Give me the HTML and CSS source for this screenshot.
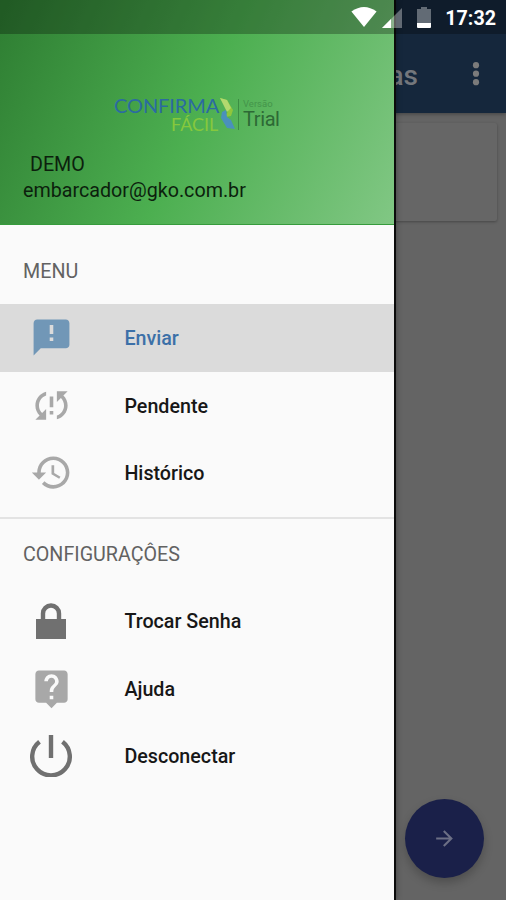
FILE: index.html
```html
<!DOCTYPE html>
<html lang="pt-BR">
<head>
<meta charset="utf-8">
<title>Confirma Fácil</title>
<link rel="stylesheet" href="styles.css">
</head>
<body>
<div class="screen">
  <main class="page">
    <header class="toolbar">
      <h1 class="toolbar-title">Notas</h1>
      <svg class="more" viewBox="0 0 8 24"><circle cx="4" cy="3.2" r="3.1"/><circle cx="4" cy="11.7" r="3.1"/><circle cx="4" cy="20.2" r="3.1"/></svg>
    </header>
    <section class="card"></section>
    <button class="fab" aria-label="Avançar"><svg viewBox="0 0 24 24"><path d="M12 4l-1.41 1.41L16.17 11H4v2h12.17l-5.58 5.59L12 20l8-8z"/></svg></button>
  </main>

  <aside class="drawer">
    <header class="account">
      <div class="logo">
        <div class="logo-name"><span class="logo-top">CONFIRMA</span><span class="logo-bottom">FÁCIL</span></div>
        <svg class="logo-mark" viewBox="0 0 18 36"><path class="mark-green" d="M1 2L8 4L14 14L12 20L6 21L9 15Z"/><path class="mark-light" d="M1 2L8 4L12 12L8 16Z"/><path class="mark-blue" d="M3 16L7 14L8 21L12 24L16 33L8 32L2 22Z"/></svg>
        <div class="logo-edition"><span class="edition-label">Versão</span><span class="edition-name">Trial</span></div>
      </div>
      <p class="account-name">DEMO</p>
      <p class="account-mail">embarcador@gko.com.br</p>
    </header>
    <nav class="menu">
      <h2 class="group-title">MENU</h2>
      <a class="item selected"><span class="icon"><svg class="i-24" viewBox="0 0 24 24"><path d="M20 2H4c-1.1 0-1.99.9-1.99 2L2 22l4-4h14c1.1 0 2-.9 2-2V4c0-1.100-.9-2-2-2zm-7 12h-2v-2h2v2zm0-4h-2V5h2v5z"/></svg></span><span>Enviar</span></a>
      <a class="item"><span class="icon"><svg class="i-24" viewBox="0 0 24 24"><path d="M3 12c0 2.210.91 4.200 2.360 5.640L3 20h6v-6l-2.240 2.240C5.680 15.150 5 13.660 5 12c0-2.610 1.670-4.830 4-5.650V4.260C5.550 5.150 3 8.270 3 12zm8 5h2v-2h-2v2zM21 4h-6v6l2.240-2.240C18.320 8.850 19 10.340 19 12c0 2.610-1.670 4.830-4 5.650v2.090c3.450-.89 6-4.010 6-7.740 0-2.210-.91-4.200-2.360-5.640L21 4zm-10 9h2V7h-2v6z"/></svg></span><span>Pendente</span></a>
      <a class="item"><span class="icon"><svg class="i-24" viewBox="0 0 24 24"><path d="M13 3c-4.970 0-9 4.030-9 9H1l3.890 3.890.07.14L9 12H6c0-3.870 3.130-7 7-7s7 3.130 7 7-3.130 7-7 7c-1.930 0-3.680-.79-4.940-2.060l-1.420 1.420C8.270 19.990 10.510 21 13 21c4.970 0 9-4.030 9-9s-4.030-9-9-9zm-1 5v5l4.280 2.540.72-1.210-3.500-2.080V8H12z"/></svg></span><span>Histórico</span></a>
      <hr class="divider">
      <h2 class="group-title">CONFIGURAÇÔES</h2>
      <a class="item"><span class="icon dark"><svg class="i-lock" viewBox="0 0 30 36"><path d="M0 16H30V36H0z"/><path class="stroke" d="M7 17V10.500a8 8 0 0 1 16 0V17"/></svg></span><span>Trocar Senha</span></a>
      <a class="item"><span class="icon"><svg class="i-24" viewBox="0 0 24 24"><path d="M19 2H5c-1.110 0-2 .9-2 2v14c0 1.100.89 2 2 2h4l3 3 3-3h4c1.100 0 2-.9 2-2V4c0-1.100-.9-2-2-2zm-6 16h-2v-2h2v2zm2.070-7.750l-.9.920C13.450 11.900 13 12.500 13 14h-2v-.5c0-1.100.45-2.100 1.170-2.830l1.240-1.260c.37-.36.59-.86.59-1.410 0-1.100-.9-2-2-2s-2 .9-2 2H8c0-2.210 1.790-4 4-4s4 1.790 4 4c0 .88-.36 1.680-.93 2.250z"/></svg></span><span>Ajuda</span></a>
      <a class="item"><span class="icon dark"><svg class="i-power" viewBox="0 0 42 42"><path class="stroke" d="M21 0V23M9.500 6.700A18.800 18.800 0 1 0 32.500 6.700"/></svg></span><span>Desconectar</span></a>
    </nav>
  </aside>

  <div class="statusbar">
    <svg class="wifi" viewBox="0 0 26 20"><path d="M13 20L.4 4.500Q13-4.500 25.600 4.500Z"/></svg>
    <svg class="signal" viewBox="0 0 20 20"><path class="faint" d="M20 0V20H0z"/><path d="M9 11V20H0z"/></svg>
    <svg class="battery" viewBox="0 0 14 21"><path class="faint" d="M4 0H10V2H14V16H0V2H4z"/><path d="M0 16H14V20Q14 21 13 21H1Q0 21 0 20z"/></svg>
    <time class="clock">17:32</time>
  </div>
</div>
</body>
</html>
```
FILE: styles.css
```css
* { box-sizing: border-box; }
body { margin: 0; font-family: Roboto, "Liberation Sans", sans-serif; }
h1, h2, p { margin: 0; font-weight: 400; }
svg { display: block; fill: currentColor; }

.screen { position: relative; width: 506px; height: 900px; overflow: hidden; }

.page { height: 900px; background: #646464; display: flex; flex-direction: column; }
.toolbar {
  height: 113px; padding: 36px 26px 0 0; flex: none;
  display: flex; align-items: center; justify-content: flex-end;
  background: #15273c; color: #74777c;
  box-shadow: 0 1px 4px rgba(0, 0, 0, .35);
}
.toolbar-title { font-size: 28px; font-weight: 500; line-height: 32px; margin: 2px 54px 0 0; }
.more { width: 8px; height: 24px; margin-top: -2px; color: #7b7b7b; }
.card {
  height: 98px; margin: 10px 9px 0 10px; flex: none; border-radius: 2px;
  background: #666; box-shadow: 0 1px 3px rgba(0, 0, 0, .3);
}
.fab {
  width: 79px; height: 79px; margin: auto 22px 22px auto; padding: 0; flex: none;
  display: flex; align-items: center; justify-content: center;
  border: 0; border-radius: 50%; background: #1a2049; color: #6c6f85;
  box-shadow: 0 5px 10px rgba(0, 0, 0, .22);
}
.fab svg { width: 25px; height: 25px; }

.drawer {
  position: absolute; top: 0; left: 0; width: 396px; height: 900px;
  background: #fafafa; border-right: 2px solid #0b0b0b;
  box-shadow: 0 0 6px rgba(0, 0, 0, .35);
}
.account {
  height: 225px; padding: 96px 23px 0; color: #0c1f0d;
  background: linear-gradient(115deg, #2e7d32, #4caf50 50%, #81c784);
  border-bottom: 1px solid #369b3c;
}
.logo { display: flex; height: 38px; margin-left: 91px; }
.logo-name { width: 106px; display: flex; flex-direction: column; font-family: Lato, sans-serif; }
.logo-top { font-size: 20px; line-height: 19px; letter-spacing: -.1px; color: #2b6ba1; white-space: nowrap; }
.logo-bottom { font-size: 18px; line-height: 19px; color: #86c83d; padding-left: 57px; }
.logo-mark { width: 18px; height: 36px; margin-left: -1px; }
.mark-green { fill: #8fc63c; }
.mark-light { fill: #b2d96f; }
.mark-blue { fill: #4a91bb; }
.logo-edition {
  margin: 3px 0 0 1px; height: 31px; padding-left: 4px; border-left: 1px solid #3c8d43;
  display: flex; flex-direction: column; color: #2d6935;
}
.edition-label { font-size: 9.500px; line-height: 9px; color: #44944a; }
.edition-name { font-size: 20px; line-height: 23px; letter-spacing: -.4px; }
.account-name { font-size: 19.700px; line-height: 26px; margin: 18px 0 0 7px; }
.account-mail { font-size: 19.700px; line-height: 26px; }

.menu { padding-top: 11.500px; }
.group-title {
  height: 67.500px; line-height: 70px; padding-left: 23px;
  font-size: 19.700px; color: #626262;
}
.item {
  height: 67.500px; padding-left: 23px; display: flex; align-items: center;
  font-size: 19.700px; font-weight: 500; line-height: 24px; color: #171717;
}
.item > span:last-child { padding-top: 3px; }
.selected { background: #dbdbdb; color: #3c70a8; }
.icon { width: 56px; margin-right: 45.400px; display: flex; justify-content: center; color: #a8a8a8; }
.selected .icon { color: #7197b7; }
.icon.dark { color: #707070; }
.i-24 { width: 43px; height: 43px; }
.i-lock { width: 30px; height: 36px; }
.i-power { width: 42px; height: 42px; }
.stroke { fill: none; stroke: currentColor; stroke-width: 4.400; }
.divider { height: 2px; margin: 10.500px 0 .5px; border: 0; background: #e3e3e3; }

.statusbar {
  position: absolute; inset: 0 0 auto; height: 34px; padding: 0 10px 0 0;
  display: flex; align-items: center; justify-content: flex-end;
  background: rgba(0, 0, 0, .28); color: #fff;
}
.wifi { width: 26px; height: 20px; margin-right: 5px; }
.signal { width: 20px; height: 20px; margin: 1px 15px 0 0; }
.battery { width: 14px; height: 21px; margin: 1px 14px 0 0; }
.faint { opacity: .35; }
.clock { font-size: 19.700px; font-weight: 700; line-height: 34px; padding-top: 3px; }
```
